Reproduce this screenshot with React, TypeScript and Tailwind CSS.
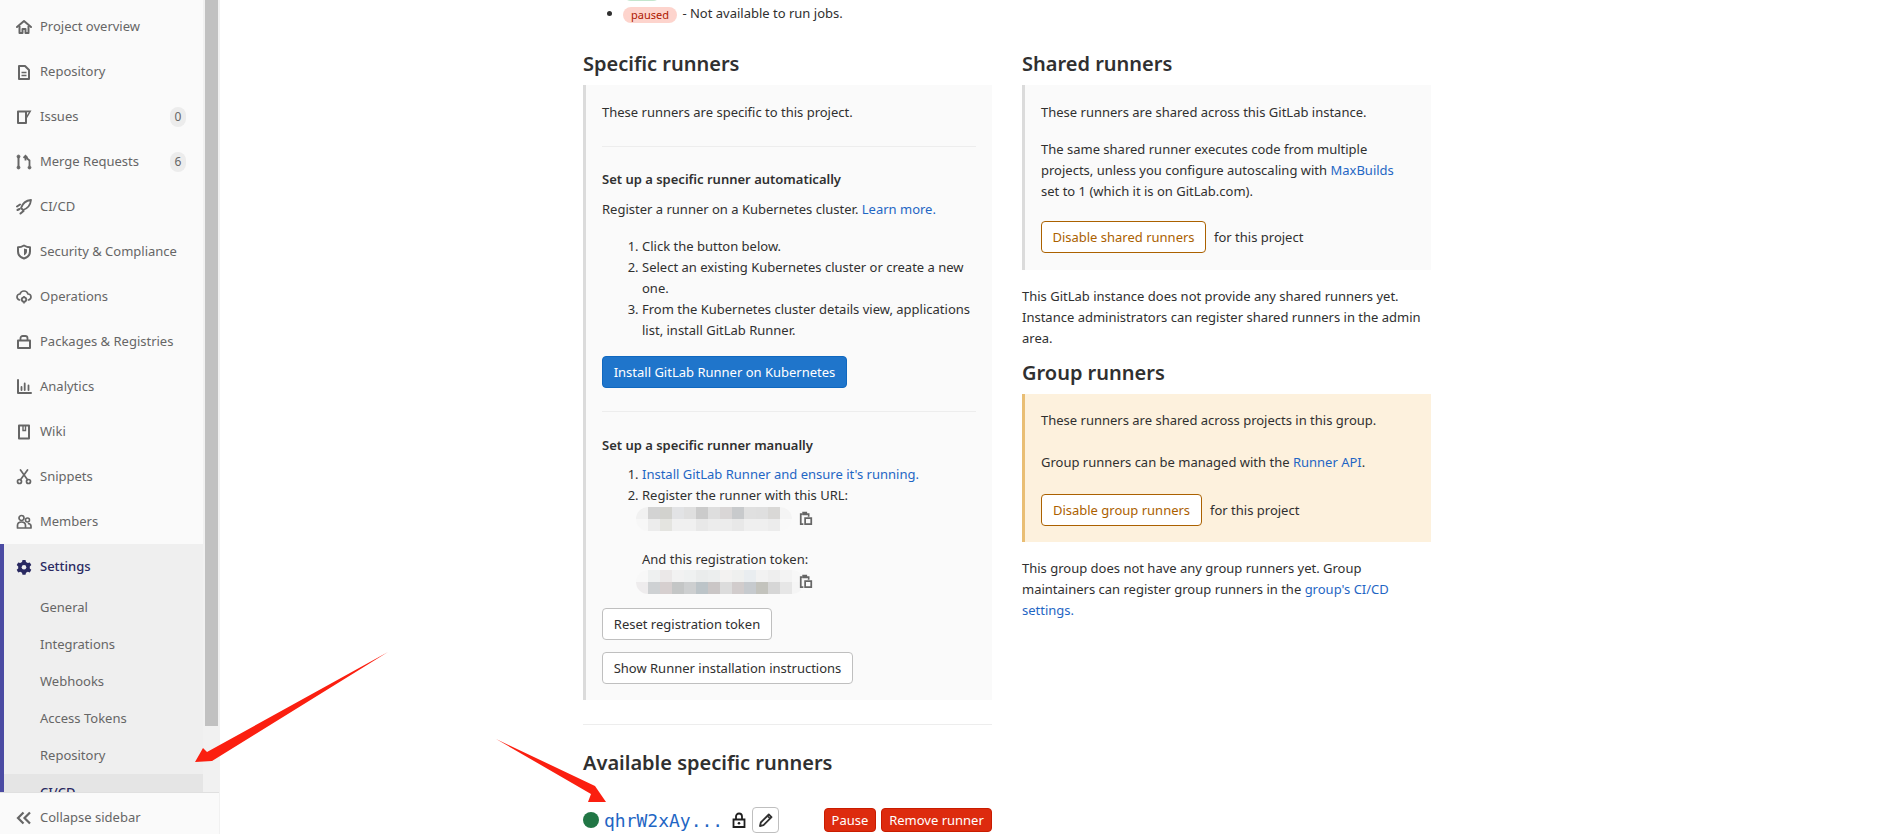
import React from "react";

const I = ({ children, className = "w-4 h-4" }: { children: React.ReactNode; className?: string }) => (
  <svg viewBox="0 0 16 16" fill="none" stroke="currentColor" strokeWidth="2" className={`${className} shrink-0`}>{children}</svg>
);

const Home = () => <I><path d="M1 8l7-6 7 6" strokeLinecap="round" strokeLinejoin="round" /><path d="M3.500 7v7h3v-4h3v4h3V7" strokeLinejoin="round" /></I>;
const Doc = () => <I><path d="M3 2h6l4 4v9H3z" strokeLinejoin="round" /><path d="M5.500 8.500h5M5.500 11.500h5" strokeWidth="1.500" /></I>;
const Issue = () => <I><path d="M2 2.500h8v11.500H2z" strokeLinejoin="round" /><path d="M10.500 1.500H15.500L10.500 10z" fill="currentColor" stroke="none" /><path d="M11 3.200h1.800L11 6.300z" fill="#fafafa" stroke="none" /></I>;
const Merge = () => <I><path d="M2.500 3v10" strokeWidth="2" /><path d="M13.500 12V6.500L10.500 4" strokeWidth="1.800" /><path d="M9.500 6.500V1.800M7.500 3.800l2-2 2 2" strokeWidth="1.800" /><circle cx="2.500" cy="2.500" r="1.500" fill="currentColor" strokeWidth="0.800" /><circle cx="2.500" cy="13.500" r="1.500" fill="currentColor" strokeWidth="0.800" /><circle cx="13.500" cy="13.500" r="1.500" fill="currentColor" strokeWidth="0.800" /></I>;
const Rocket = () => <I><path d="M15 1C10 1.500 6.500 4.500 5 9l2 2c4.500-1.500 7.500-5 8-10z" strokeWidth="1.800" strokeLinejoin="round" /><path d="M1 7.500l3-2M4.500 14.500l3-2.500M1.500 11l2-1" strokeWidth="2" strokeLinecap="round" /></I>;
const Shield = () => <I><path d="M8 1.500c2 1.200 4 1.700 6 1.700v4.300c0 3.500-2.500 6-6 7-3.500-1-6-3.500-6-7V3.200c2 0 4-.5 6-1.700z" strokeLinejoin="round" /><path d="M8 4.500c1 .5 2 .8 3 .8v2c0 2-1.300 3.400-3 4.200z" fill="currentColor" stroke="none" /></I>;
const Ops = () => <I><path d="M3.500 11C2 10.500 1 9.300 1 8c0-1.700 1.300-3 3-3 .6-2 2.200-3 4-3s3.400 1 4 3c1.700 0 3 1.300 3 3 0 1.300-1 2.500-2.500 3" strokeWidth="1.700" strokeLinecap="round" /><circle cx="8" cy="10.500" r="2.200" strokeWidth="1.800" /><path d="M8 7v1M8 13v1.500M4.800 10.500h1M10.200 10.500h1" strokeWidth="1.600" /></I>;
const Pack = () => <I><path d="M2 6.500h12v7.500H2z" strokeLinejoin="round" /><path d="M4.500 6.500V4.200C4.500 3 5.500 2 6.700 2h2.600c1.200 0 2.200 1 2.200 2.200v2.300" strokeWidth="1.800" /></I>;
const Chart = () => <I><path d="M2 1v13h13" strokeLinecap="round" strokeLinejoin="round" /><path d="M5.500 8v3M8.700 4.500V11M12.500 6.500V11" strokeLinecap="round" strokeWidth="1.800" /></I>;
const Wiki = () => <I><path d="M3 1.500h10v13H3z" strokeLinejoin="round" /><path d="M7 2v4.500h2.500V2" strokeWidth="1.400" /></I>;
const Scissors = () => <I><circle cx="3.500" cy="12.500" r="2" strokeWidth="1.700" /><circle cx="12.500" cy="12.500" r="2" strokeWidth="1.700" /><path d="M4.500 10.800L11.500 1M11.500 10.800L4.500 1" strokeWidth="1.700" strokeLinecap="round" /></I>;
const Members = () => <I><circle cx="5.500" cy="4" r="2.500" strokeWidth="1.700" /><circle cx="11.500" cy="6" r="2" strokeWidth="1.600" /><path d="M1.500 14v-2.500c0-2 1.500-3.500 4-3.500s4 1.500 4 3.500V14zM9.500 14h5.500v-1.800c0-1.700-1.200-2.700-3.200-2.700" strokeWidth="1.700" strokeLinejoin="round" /></I>;
const Gear = () => <I><path d="M6.500 1h3l.5 2 1.800 1 2-.6 1.500 2.600-1.500 1.400v2l1.500 1.400-1.500 2.600-2-.6-1.800 1-.5 2h-3l-.5-2-1.800-1-2 .6L.700 10.800 2.200 9.400v-2L.700 6l1.500-2.600 2 .6 1.800-1z" fill="currentColor" stroke="none" /><circle cx="8" cy="8.200" r="2.300" fill="#efefef" stroke="none" /></I>;
const Chevrons = () => <I><path d="M7.500 2.500L2 8l5.500 5.500M14 2.500L8.500 8l5.500 5.500" strokeWidth="2.200" /></I>;
const Copy = () => <I className="w-[14px] h-[17px]"><path d="M4 3H2v11.500h3" strokeWidth="2" /><path d="M4.500 3.500V1h4v2.500z" strokeWidth="1.500" fill="currentColor" /><path d="M9 3h2v3" strokeWidth="2" /><path d="M7 7.500h7v7H7z" strokeWidth="2" /></I>;
const Lock = () => <I className="w-[16px] h-[18px] text-[#1f1f1f]"><path d="M5 7V4.500a3 3 0 0 1 6 0V7" strokeWidth="1.800" /><path d="M2.500 7.500h11v7.500h-11z" strokeWidth="1.800" /><circle cx="8" cy="11.200" r="1.300" fill="currentColor" stroke="none" /></I>;
const Pencil = () => <I className="w-4 h-4 text-[#303030]"><path d="M2 14l.8-3.500 8-8 2.700 2.700-8 8z" strokeWidth="1.800" strokeLinejoin="round" /><path d="M9.500 4l2.700 2.700" strokeWidth="1.500" /></I>;

const L = ({ children }: { children: React.ReactNode }) => <a className="text-[#1f66c4]">{children}</a>;

const navItems: { label: string; icon: React.ReactNode; badge?: string }[] = [
  { label: "Project overview", icon: <Home /> },
  { label: "Repository", icon: <Doc /> },
  { label: "Issues", icon: <Issue />, badge: "0" },
  { label: "Merge Requests", icon: <Merge />, badge: "6" },
  { label: "CI/CD", icon: <Rocket /> },
  { label: "Security & Compliance", icon: <Shield /> },
  { label: "Operations", icon: <Ops /> },
  { label: "Packages & Registries", icon: <Pack /> },
  { label: "Analytics", icon: <Chart /> },
  { label: "Wiki", icon: <Wiki /> },
  { label: "Snippets", icon: <Scissors /> },
  { label: "Members", icon: <Members /> },
];

const subItems = ["General", "Integrations", "Webhooks", "Access Tokens", "Repository"];

const urlMosaic = [
  ["#f1f1f1", "#d3d3d3", "#d2d2ce", "#e2e3e5", "#dfdfdf", "#cbcbcb", "#dedede", "#d9d6d6", "#c8cacc", "#e0e0e0", "#dfdfdf", "#d9d8d6", "#f4f4f4"],
  ["#f7f7f7", "#ececec", "#e4e4e0", "#f0f0f0", "#f0f0f0", "#e8e8e8", "#ececec", "#ececec", "#e8e8e8", "#efefef", "#efefef", "#ececec", "#f9f9f9"],
];
const tokenMosaic = [
  ["#f8f8f8", "#eef0f0", "#ebe8e8", "#f2f2f2", "#eff1f1", "#eaecec", "#eceeee", "#f3f2f1", "#eff0ef", "#e9edf0", "#f2f2f2", "#eeeeee", "#f3f3f3", "#f7f7f7"],
  ["#eeeced", "#ced1d3", "#d6cfcf", "#c4c6c6", "#cdcfd0", "#bcc4c8", "#cac6c6", "#dcdcdc", "#d1cccc", "#c6cace", "#c3c3bd", "#d6d6d6", "#e6e6e6", "#f5f5f5"],
];

const Mosaic = ({ rows }: { rows: string[][] }) => (
  <div className="flex flex-col overflow-hidden rounded-[12px]">
    {rows.map((r, i) => (
      <div key={i} className="flex">
        {r.map((c, j) => (
          <div key={j} className="w-[12px] h-[12px]" style={{ backgroundColor: c }} />
        ))}
      </div>
    ))}
  </div>
);

const Btn = ({ children, className = "" }: { children: React.ReactNode; className?: string }) => (
  <div className={`inline-flex items-center justify-center h-8 rounded-[4px] border whitespace-nowrap ${className}`}>{children}</div>
);

const H3 = ({ children, className = "" }: { children: React.ReactNode; className?: string }) => (
  <h3 className={`text-[20px] leading-[26px] font-semibold text-[#303030] whitespace-nowrap ${className}`}>{children}</h3>
);

export default function App() {
  return (
    <div className="relative flex h-[834px] w-[1904px] overflow-hidden bg-white text-[13px] leading-[21px] text-[#303030] font-['Noto_Sans',sans-serif]">
      <aside className="flex flex-col w-[220px] h-full shrink-0 bg-[#f1f1f1] text-[#666666]">
        <div className="flex flex-1 min-h-0">
          <nav className="w-[203px] shrink-0 overflow-hidden pt-[4px] bg-[#fafafa]">
            {navItems.map((n) => (
              <div key={n.label} className="flex items-center h-[45px] pl-4 pr-[17px]">
                {n.icon}
                <span className="ml-2 whitespace-nowrap">{n.label}</span>
                {n.badge && (
                  <span className="ml-auto flex items-center justify-center w-4 h-5 rounded-full bg-[#ececec] text-[12px]">{n.badge}</span>
                )}
              </div>
            ))}
            <div className="border-l-4 border-[#4b4ba3] bg-[#efefef] pb-10">
              <div className="flex items-center h-[45px] pl-3 text-[#292961] font-medium">
                <Gear />
                <span className="ml-2">Settings</span>
              </div>
              {subItems.map((s) => (
                <div key={s} className="flex items-center h-[37px] pl-9">{s}</div>
              ))}
              <div className="flex items-center h-[37px] pl-9 bg-[#e5e5e5] text-[#292961] font-medium">CI/CD</div>
            </div>
          </nav>
          <div className="w-[17px] shrink-0 pl-[2px] pr-[2px]">
            <div className="h-[726px] bg-[#c1c1c1]" />
          </div>
        </div>
        <div className="flex items-center h-[42px] shrink-0 w-[219px] pl-4 pt-2 bg-[#fafafa] border-t border-[#e0e0e0]">
          <Chevrons />
          <span className="ml-2">Collapse sidebar</span>
        </div>
      </aside>

      <main className="pl-[363px] w-[1211px] -mt-[18px]">
        <ul className="list-disc pl-10 h-[42px] mb-[26px]">
          <li className="whitespace-nowrap">
            <span className="inline-flex items-center h-4 w-[38px] justify-center rounded-full bg-[#c3e6cd] text-[#24663b] text-[11px] mr-[2px]">active</span> - Available to run jobs.
          </li>
          <li className="whitespace-nowrap">
            <span className="inline-flex items-center h-4 w-[54px] justify-center rounded-full bg-[#fdd4cd] text-[#ae1800] text-[11px] mr-[2px] align-[-1px]">paused</span> - Not available to run jobs.
          </li>
        </ul>

        <div className="grid grid-cols-[409px_409px] gap-x-[30px] items-start">
          <section>
            <H3 className="mt-[1px] mb-[8px]">Specific runners</H3>
            <div className="h-[615px] border-l-[3px] border-[#dbdbdb] bg-[#fafafa] pt-[17px] pl-4 pr-4">
              <p className="whitespace-nowrap">These runners are specific to this project.</p>
              <hr className="mt-[23px] border-[#ededed]" />
              <p className="mt-[22px] font-semibold whitespace-nowrap">Set up a specific runner automatically</p>
              <p className="mt-[9px] whitespace-nowrap">Register a runner on a Kubernetes cluster. <L>Learn more.</L></p>
              <ol className="mt-4 list-decimal pl-10">
                <li>Click the button below.</li>
                <li>Select an existing Kubernetes cluster or create a new<br />one.</li>
                <li>From the Kubernetes cluster details view, applications<br />list, install GitLab Runner.</li>
              </ol>
              <Btn className="mt-[15px] w-[245px] bg-[#1f75cb] border-[#1068bf] text-white">Install GitLab Runner on Kubernetes</Btn>
              <hr className="mt-[23px] border-[#ededed]" />
              <p className="mt-[23px] font-semibold whitespace-nowrap">Set up a specific runner manually</p>
              <ol className="mt-[8px] list-decimal pl-10">
                <li><L>Install GitLab Runner and ensure it's running.</L></li>
                <li>
                  Register the runner with this URL:
                  <div className="flex items-start -ml-[6px] text-[#666666] mt-[1px]">
                    <Mosaic rows={urlMosaic} />
                    <span className="ml-[7px] mt-[3px]"><Copy /></span>
                  </div>
                  <p className="mt-[18px]">And this registration token:</p>
                  <div className="flex items-start -ml-[6px] text-[#666666]">
                    <Mosaic rows={tokenMosaic} />
                    <span className="-ml-[5px] mt-[3px]"><Copy /></span>
                  </div>
                </li>
              </ol>
              <div className="mt-[14px] flex flex-col items-start gap-3">
                <Btn className="w-[170px] border-[#bfbfbf] bg-white">Reset registration token</Btn>
                <Btn className="w-[251px] border-[#bfbfbf] bg-white">Show Runner installation instructions</Btn>
              </div>
            </div>
            <hr className="mt-6 border-[#ededed]" />
            <H3 className="mt-[25px]">Available specific runners</H3>
            <div className="mt-[30px] flex items-center h-7">
              <span className="w-4 h-4 rounded-full bg-[#217645]" />
              <span className="ml-[5px] text-[18px] text-[#1f66c4] font-['DejaVu_Sans_Mono',monospace] whitespace-nowrap">qhrW2xAy...</span>
              <span className="ml-[8px]"><Lock /></span>
              <span className="ml-[5px] flex items-center justify-center w-[27px] h-[26px] rounded-[4px] border border-[#bfbfbf] bg-white"><Pencil /></span>
              <span className="ml-auto flex items-center justify-center w-[52px] h-[24px] rounded-[4px] bg-[#dd2b0e] border border-[#c91c00] text-white">Pause</span>
              <span className="ml-[5px] flex items-center justify-center w-[111px] h-[24px] rounded-[4px] bg-[#dd2b0e] border border-[#c91c00] text-white whitespace-nowrap">Remove runner</span>
            </div>
          </section>

          <section>
            <H3 className="mt-[1px] mb-[8px]">Shared runners</H3>
            <div className="h-[185px] border-l-[3px] border-[#dbdbdb] bg-[#fafafa] pt-[17px] pl-4 pr-4 whitespace-nowrap">
              <p>These runners are shared across this GitLab instance.</p>
              <p className="mt-4">The same shared runner executes code from multiple<br />projects, unless you configure autoscaling with <L>MaxBuilds</L><br />set to 1 (which it is on GitLab.com).</p>
              <div className="mt-[19px] flex items-center">
                <Btn className="w-[165px] border-[#ab6100] text-[#ab6100] bg-white">Disable shared runners</Btn>
                <span className="ml-2">for this project</span>
              </div>
            </div>
            <p className="mt-4 whitespace-nowrap">This GitLab instance does not provide any shared runners yet.<br />Instance administrators can register shared runners in the admin<br />area.</p>
            <H3 className="mt-[11px] mb-[8px]">Group runners</H3>
            <div className="h-[148px] border-l-[3px] border-[#e9be74] bg-[#fdf1dd] pt-4 pl-4 pr-4 whitespace-nowrap">
              <p>These runners are shared across projects in this group.</p>
              <p className="mt-[21px]">Group runners can be managed with the <L>Runner API</L>.</p>
              <div className="mt-[21px] flex items-center">
                <Btn className="w-[161px] border-[#ab6100] text-[#ab6100] bg-white">Disable group runners</Btn>
                <span className="ml-2">for this project</span>
              </div>
            </div>
            <p className="mt-[16px] whitespace-nowrap">This group does not have any group runners yet. Group<br />maintainers can register group runners in the <L>group's CI/CD</L><br /><L>settings.</L></p>
          </section>
        </div>
      </main>

      <svg className="absolute inset-0 w-[1904px] h-[834px] pointer-events-none" viewBox="0 0 1904 834">
        <polygon points="388,652 212,761 195,762 203,748 207,752" fill="#fb1f10" />
        <polygon points="496,739 595,786 606,802 588,802 591,794" fill="#fb1f10" />
      </svg>
    </div>
  );
}
